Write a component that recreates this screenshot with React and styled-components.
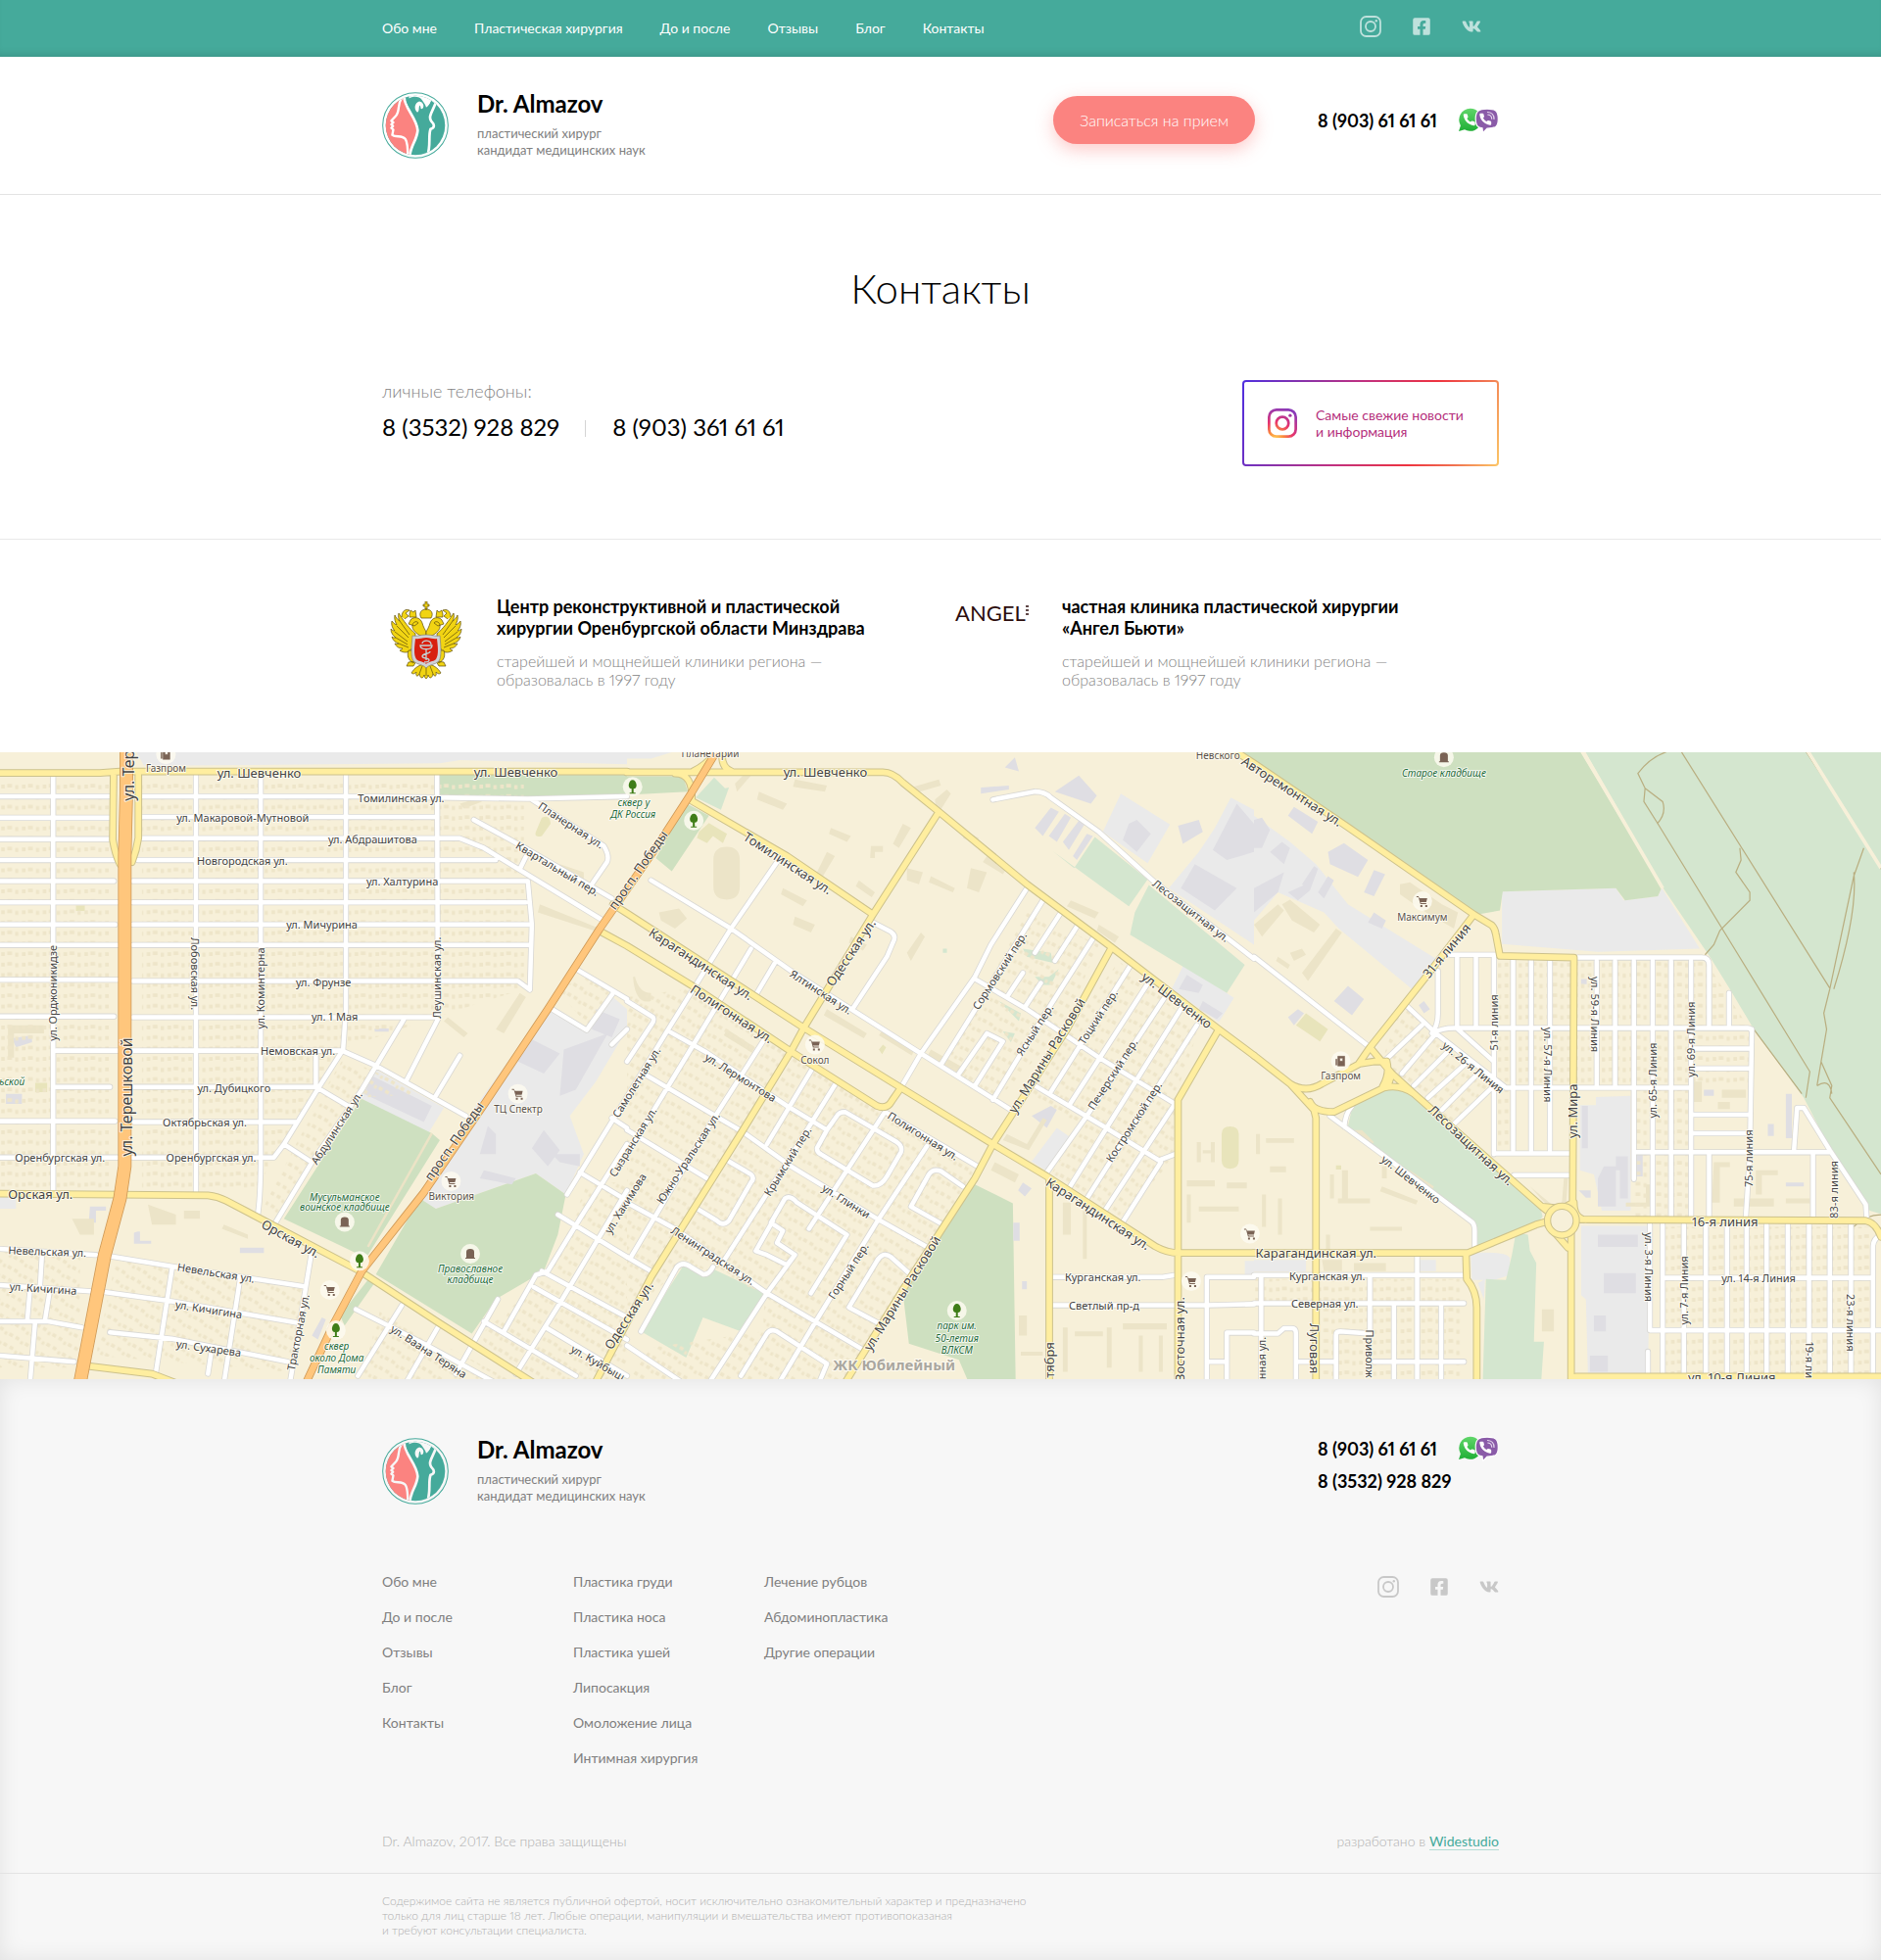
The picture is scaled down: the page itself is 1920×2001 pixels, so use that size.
import React from "react";
import styled, { createGlobalStyle, css } from "styled-components";
import { FaFacebookSquare, FaVk } from "react-icons/fa";

const GlobalStyle = createGlobalStyle`
  *, *::before, *::after { box-sizing: border-box; }
  body { margin: 0; background: #fff; color: #000; font-family: Lato, "Open Sans", sans-serif; font-size: 14px; line-height: 20px; font-variant-numeric: proportional-nums; }
  h1, h2, p, ul { margin: 0; padding: 0; }
  ul { list-style: none; }
  a { color: inherit; text-decoration: none; }
  svg { display: block; }
`;

/* ---------- layout ---------- */

const Container = styled.div`
  width: 100%;
  max-width: 1180px;
  margin: 0 auto;
  padding: 0 20px;
`;

const TopBar = styled.div`
  background: #45aa9b;
  box-shadow: inset 0 -8px 8px -6px rgba(0, 0, 0, 0.14);
`;

const TopBarRow = styled(Container)`
  display: flex;
  align-items: center;
  justify-content: space-between;
  min-height: 58px;
  padding-right: 38px;
`;

const MainNav = styled.nav`
  display: flex;
  flex-wrap: wrap;
  gap: 0 38px;
  padding-bottom: 1px;
  color: #fff;
`;

const Socials = styled.div`
  display: flex;
  align-items: center;
  gap: 31px;
  color: ${(p) => (p.$light ? "rgba(255,255,255,.65)" : "#c8c8c8")};
  ${(p) => p.$light && css`padding-bottom: 4px;`}
`;

const Header = styled.header`
  border-bottom: 1px solid #e3e3e3;
`;

const HeaderRow = styled(Container)`
  display: flex;
  flex-wrap: wrap;
  justify-content: space-between;
  gap: 20px;
  padding-top: 34px;
  padding-bottom: 36px;
`;

const Brand = styled.a`
  display: flex;
  align-items: flex-end;
  gap: 29px;
`;

const BrandName = styled.strong`
  display: block;
  margin-bottom: 8px;
  font-size: 24px;
  line-height: 28px;
`;

const BrandNote = styled.span`
  display: block;
  color: #808080;
  font-size: 13px;
  line-height: 17px;
`;

const HeaderActions = styled.div`
  display: flex;
  align-items: center;
  align-self: flex-start;
  gap: 64px;
  margin-top: 6px;
`;

const BookButton = styled.button`
  height: 49px;
  padding: 0 27px;
  border: 0;
  border-radius: 25px;
  background: #fb8380;
  box-shadow: 0 6px 18px rgba(251, 131, 128, 0.42);
  color: #fff;
  font: 300 16px/20px Lato, sans-serif;
  cursor: pointer;
`;

const Phones = styled.div`
  display: flex;
  flex-direction: column;
  gap: 7px;
`;

const PhoneLine = styled.div`
  display: flex;
  align-items: center;
  gap: 15px;
  font-size: 18px;
  font-weight: 700;
  line-height: 26px;

  a { min-width: 128px; }
`;

const ContactSection = styled.section`
  padding: 70px 0 74px;
  border-bottom: 1px solid #e9e9e9;
`;

const PageTitle = styled.h1`
  font-size: 42px;
  font-weight: 300;
  line-height: 50px;
  text-align: center;
`;

const ContactRow = styled.div`
  display: flex;
  flex-wrap: wrap;
  justify-content: space-between;
  gap: 20px;
  margin-top: 69px;
`;

const PhonesLabel = styled.p`
  margin-bottom: 12px;
  color: #848484;
  font-size: 18px;
  font-weight: 300;
  line-height: 22px;
`;

const PersonalPhones = styled.div`
  display: flex;
  align-items: center;
  font-size: 24px;
  line-height: 28px;

  a + a {
    margin-left: 26px;
    padding-left: 28px;
    background: linear-gradient(#d4d4d4, #d4d4d4) 0 60% / 1px 17px no-repeat;
  }
`;

const InstaCard = styled.a`
  display: flex;
  align-items: center;
  gap: 19px;
  min-width: 262px;
  height: 88px;
  padding: 0 24px;
  border: 2px solid transparent;
  border-radius: 4px;
  background:
    linear-gradient(#fff, #fff) padding-box,
    linear-gradient(110deg, #4f2fe0 0%, #8a32a8 22%, #c03080 42%, #ee3340 68%, #f07050 84%, #fcc766 100%) border-box;
  color: #b52f7c;
  line-height: 17px;
`;

const Clinics = styled.section`
  padding: 57px 0 65px;
`;

const ClinicGrid = styled(Container)`
  display: grid;
  grid-template-columns: 1fr 1fr;
  gap: 14px;
`;

const Clinic = styled.article`
  display: grid;
  grid-template-columns: 117px 1fr;
`;

const ClinicMark = styled.div`
  padding: 6px 0 0 8px;
`;

const ClinicTitle = styled.h2`
  margin-bottom: 13px;
  font-size: 18px;
  font-weight: 700;
  line-height: 22px;
`;

const ClinicText = styled.p`
  color: #848484;
  font-size: 16px;
  font-weight: 300;
  line-height: 19px;
`;

const AngelMark = styled.span`
  display: flex;
  align-items: flex-start;
  color: #2c0d0d;
  font: 400 22px/24px Lato, sans-serif;
`;

const MapFrame = styled.div`
  overflow: hidden;

  svg { width: 100%; height: 640px; }
`;

const Footer = styled.footer`
  background: #f7f7f7;
  box-shadow: inset 0 0 22px rgba(0, 0, 0, 0.09);
`;

const FooterHead = styled(Container)`
  display: flex;
  flex-wrap: wrap;
  justify-content: space-between;
  gap: 20px;
  padding-top: 58px;
`;

const FooterLinks = styled(Container)`
  display: flex;
  flex-wrap: wrap;
  justify-content: space-between;
  align-items: flex-start;
  gap: 20px;
  margin-top: 69px;
  color: #7f7f7f;
`;

const FooterNav = styled.nav`
  display: grid;
  grid-template-columns: repeat(3, 195px);
`;

const LinkColumn = styled.ul`
  display: flex;
  flex-direction: column;
  gap: 16px;
`;

const SocialSlot = styled.div`
  padding-top: 4px;
`;

const Legal = styled(Container)`
  display: flex;
  flex-wrap: wrap;
  justify-content: space-between;
  margin-top: 65px;
  padding-bottom: 22px;
  color: #b0b0b0;
  font-weight: 300;
`;

const StudioLink = styled.a`
  border-bottom: 1px solid #b5dcd5;
  color: #45aa9b;
  font-weight: 400;
`;

const Disclaimer = styled.div`
  border-top: 1px solid #e3e3e3;
  padding: 20px 0 23px;
  color: #b0b0b0;
  font-size: 12px;
  font-weight: 300;
  line-height: 15px;
`;

/* ---------- icons ---------- */

const Logo = ({ ground = "#fff" }) => (
  <svg width="68" height="68" viewBox="19 18 202 202" aria-hidden="true">
    <defs>
      <clipPath id="disc"><circle cx="120" cy="119" r="90" /></clipPath>
    </defs>
    <circle cx="120" cy="119" r="99" fill="none" stroke="#45aa9b" strokeWidth="3" />
    <g clipPath="url(#disc)">
      <rect x="20" y="20" width="200" height="200" fill="#45aa9b" />
      <path d="M92 20C84 62 124 95 127 135C125 165 105 182 103 220H10V20Z" fill="#fb8380" />
      <g fill="none" stroke={ground} strokeLinecap="round" strokeLinejoin="round">
        <path d="M85 26C84 66 124 94 127 134C125 164 104 182 103 214" strokeWidth="8" />
        <path d="M78 36C64 58 74 76 61 90L47 105L53 110L47 116L52 121L47 127L53 132L50 148C60 157 80 147 90 161C96 171 97 190 97 212" strokeWidth="7" />
        <path d="M182 50C172 76 158 92 168 106C178 116 180 126 166 130C158 152 168 178 156 212" strokeWidth="8" />
      </g>
      <path d="M72 20L80 40L88 34C90 46 96 46 100 38C112 30 132 30 140 42L148 54C154 62 150 70 158 62C166 52 166 48 168 44L176 50L190 40L180 20Z" fill={ground} />
      <path d="M90 32C92 56 104 70 118 82C112 66 116 48 130 42C124 36 108 38 104 48C100 44 104 36 98 30Z" fill="#45aa9b" />
      <path d="M132 46C118 50 114 68 126 80C134 74 128 64 134 58C138 66 134 72 142 68C148 60 144 48 132 46Z" fill={ground} />
      <path d="M168 46C170 62 160 78 148 84L144 70C154 66 162 58 168 46Z" fill="#45aa9b" />
    </g>
  </svg>
);

const InstagramIcon = ({ size = 22, stroke = "currentColor", heavy }) => (
  <svg width={size} height={size} viewBox="0 0 22 22" fill="none" stroke={stroke} strokeWidth={heavy ? 2 : 1.8} aria-hidden="true">
    <rect x="1" y="1" width="20" height="20" rx="5.5" />
    <circle cx="11" cy="11" r={heavy ? 4.6 : 5} />
    <circle cx="16.8" cy="5.3" r="1.2" fill={stroke} stroke="none" />
  </svg>
);

const InstagramColor = () => (
  <svg width="30" height="30" viewBox="0 0 22 22" aria-hidden="true">
    <defs>
      <radialGradient id="insta" gradientUnits="userSpaceOnUse" cx="6" cy="23" r="24">
        <stop offset="0" stopColor="#ffd258" />
        <stop offset=".25" stopColor="#fb8a3c" />
        <stop offset=".55" stopColor="#e7336e" />
        <stop offset="1" stopColor="#8a3ab9" />
      </radialGradient>
    </defs>
    <InstagramIcon stroke="url(#insta)" heavy />
  </svg>
);

const HANDSET =
  "M22 16.92v3a2 2 0 0 1-2.18 2 19.79 19.79 0 0 1-8.63-3.07 19.5 19.5 0 0 1-6-6 19.79 19.79 0 0 1-3.07-8.67A2 2 0 0 1 4.11 2h3a2 2 0 0 1 2 1.72c.127.96.361 1.903.7 2.81a2 2 0 0 1-.45 2.11L8.09 9.91a16 16 0 0 0 6 6l1.27-1.27a2 2 0 0 1 2.11-.45c.907.339 1.85.573 2.81.7A2 2 0 0 1 22 16.92z";

const Messengers = () => (
  <svg width="42" height="26" viewBox="0 0 42 26" role="img" aria-label="WhatsApp, Viber">
    <defs>
      <linearGradient id="wa" x1="0" y1="0" x2="0" y2="1">
        <stop offset="0" stopColor="#60d66a" />
        <stop offset="1" stopColor="#1fae35" />
      </linearGradient>
    </defs>
    <path d="M12.500 .8A11.500 11.500 0 1 1 7 22.200L1 24L2.900 18.200A11.500 11.500 0 0 1 12.500 .8Z" fill="url(#wa)" />
    <path d={HANDSET} transform="translate(4.500 5) scale(.6)" fill="#fff" />
    <path d="M30 1.200C39 1.200 41.300 3.500 41.300 11.500C41.300 19 39 21 30 21.200L25.500 25.600L25 20.800C20 20 18.200 18 18.200 11.500C18.200 3.500 21 1.200 30 1.200Z" fill="#8a5ba8" stroke="#fff" strokeWidth="1.200" />
    <path d={HANDSET} transform="translate(21 4.500) scale(.6)" fill="#fff" />
    <path d="M30.500 4.500C34.500 4.800 37 7.500 37 11.500M30.800 7C33.200 7.300 34.600 9 34.700 11.200" fill="none" stroke="#e5d8ee" strokeWidth="1.200" strokeLinecap="round" />
  </svg>
);

const Wing = () => (
  <g stroke="#5c4a08" strokeWidth=".7" strokeLinejoin="round" fill="#f1d413">
    <path d="M26 33C20 28 14 20 9 12C8 16 9 18 10 20C7 18 6 16 5 14C4 18 6 22 7 24C4 23 3 21 2 20C1 24 3 28 5 30C3 30 2 29 1 28C1 32 3 35 6 37C4 37 3 37 2 36C3 40 6 42 9 43C7 44 6 43 5 43C7 47 10 48 13 48C12 49 11 50 10 50C14 53 18 52 20 51C24 47 26 40 26 33Z" />
    <path d="M10 20L20 34M7 25L19 37M5 31L18 41M6 37L18 44M9 43L19 47" fill="none" />
    <path d="M33 36C27 33 22 29 23 24C24 20 28 20 29 22L25 25L19 23L21 19C24 15 31 16 33 22C34 26 36 29 37 31V36Z" />
    <path d="M12 16C12 10 16 7 20 9L16 12L19 15L15 18M20 13L21 9L24 11L26 9L27 16H20Z" />
    <path d="M19 50C17 56 19 60 24 63L28 58L24 50ZM19 62L17 66L24 66L27 61Z" />
  </g>
);

const Emblem = () => (
  <svg width="74" height="80" viewBox="0 0 74 80" aria-hidden="true">
    <Wing />
    <g transform="translate(74 0) scale(-1 1)"><Wing /></g>
    <g stroke="#5c4a08" strokeWidth=".7" fill="#f1d413">
      <path d="M32 17C29 12 32 8 37 8C42 8 45 12 42 17ZM36 8V5H34V3H36V0H38V3H40V5H38V8Z" />
      <path d="M37 64C30 64 25 68 22 73C24 75 26 73 27 72C26 76 28 78 30 74C31 79 34 79 35 75C36 80 38 80 39 75C40 79 43 79 44 74C46 78 48 76 47 72C48 73 50 75 52 73C49 68 44 64 37 64Z" />
      <path d="M37 66V76M33 66L30 74M41 66L44 74" />
    </g>
    <path d="M37 34C31 34 27 36 23 35C22 46 21 56 24 61C28 65 34 64 37 68C40 64 46 65 50 61C53 56 52 46 51 35C47 36 43 34 37 34Z" fill="#cfd2d6" stroke="#777" strokeWidth=".6" />
    <path d="M37 37C32 37 29 39 26 38C25 47 24 54 27 59C30 62 35 61 37 64C39 61 44 62 47 59C50 54 49 47 48 38C45 39 42 37 37 37Z" fill="#d8200f" />
    <path d="M31 45H43C43 50 31 50 31 45ZM37 49V60M42 44C42 39 33 39 33 43M41 51C41 54 33 53 33 56C33 59 40 57 40 60C40 62 36 62 35 62" fill="none" stroke="#c3d3d6" strokeWidth="1.300" />
  </svg>
);

const AngelDots = () => (
  <svg width="3" height="16" viewBox="0 0 3 16" aria-hidden="true">
    <path d="M0 5H3M0 9H3M0 13H3" stroke="#2c0d0d" strokeWidth="1.500" />
  </svg>
);

/* ---------- map ---------- */

/* The city is stored as three square tiles, 1568 units a side. */
const UNIT_X = 640 / 1568;
const UNIT_Y = 645 / 1568;
const tileTransform = (i) => `translate(${i * 640} -1) scale(${UNIT_X} ${UNIT_Y})`;

const AREAS = [
  {
    industry: "M340 0H1568V32L1150 22L1100 30L360 36ZM1370 635L1465 692L1530 608L1568 640V690L1490 820L1425 905L1460 1000L1415 1100L1340 1048L1090 1135L1050 1112L1190 880ZM940 790L1110 885L1070 950L903 862ZM0 1100H40V1135H0Z",
    dark: "M1100 57H1568V108L1320 116L1100 108ZM903 862L1080 948L1100 965L920 1250L890 1245L710 1160ZM1050 1110L1090 1135L1340 1048L1415 1100L1395 1200L1360 1290L1240 1360L1180 1445L940 1298ZM920 1312L935 1322L862 1425L850 1400Z",
    light: "",
    works: "M1320 710L1400 750L1360 800L1285 765ZM1410 740L1520 700L1440 840L1400 855ZM1490 640L1550 665L1530 710L1480 690ZM1200 1000H1240V950L1220 930ZM1330 985L1360 940L1400 990L1370 1030ZM1380 1000H1450V1030L1400 1020ZM930 805L1080 880L1060 920L910 850ZM1210 1040L1290 1060L1280 1075L1200 1060ZM937 688H972V696H937ZM30 712L80 705V722L40 735ZM345 1192H350V1215H378V1222H335V1195ZM225 1130H265V1140H240V1170H222ZM600 1232H660V1245H600ZM780 1450L805 1405L815 1410L795 1460ZM15 850H55V875H15Z",
    blocks: "M370 1125L440 1150V1175H380ZM460 1140H500V1160H460ZM560 1175L620 1200V1210L555 1185ZM180 1160H235V1200H200ZM1120 660L1170 700L1160 710L1110 670ZM1240 690L1300 600L1315 610L1260 700ZM1350 380L1500 440V450L1345 400ZM1400 280L1460 300V320L1395 295ZM20 680H110V700H35V760H20ZM1150 130L1200 115L1205 125L1160 142Z",
    sport: "M1355 165Q1375 155 1377 180L1355 210Q1335 215 1340 200ZM88 823H118V846H88ZM190 383H212V396H190Z",
  },
  {
    industry: "M0 0H120L60 18H0ZM1235 105L1358 182L1302 278L1190 200ZM1510 115L1568 145V480L1355 340L1430 250L1470 190ZM1392 530L1518 612L1480 672L1362 590ZM1075 935L1112 960L1050 1042L1012 1018ZM1545 1265H1568V1300H1545Z",
    dark: "M0 62H140L152 100L0 108ZM150 130L205 160L112 298L72 265ZM870 1075L965 1122L972 1568H855L830 1510L705 1470L690 1345L785 1190ZM1530 0H1568V22Z",
    light: "M218 65L245 92L255 90L235 145L172 115ZM1065 248L1118 290L1170 213L1302 318L1255 385L1185 335ZM1305 332L1545 530L1500 600L1258 455L1270 400ZM145 1270L185 1300L215 1285L345 1345L285 1440L190 1405L148 1505L35 1440ZM990 490L1060 500L1065 525L1000 510ZM1020 560H1055L1080 540L1060 580L1040 580ZM930 620L985 650L980 670L950 640ZM790 490H800V500H790ZM940 695L970 700L960 722Z",
    works: "M1525 130L1568 180V250L1500 270L1465 245ZM1420 280L1525 340L1470 395L1385 340ZM1255 180L1275 170L1310 205L1275 250L1240 220ZM1060 880L1075 890L1050 935L1012 905ZM990 1070L1012 1085L995 1105L978 1090ZM966 1170H982V1215H966ZM988 1315H1000V1335H988ZM1400 555L1440 580L1430 600L1380 590ZM1440 620L1490 650L1475 665L1430 640ZM1378 185L1430 170L1440 200L1390 230ZM1070 100L1130 60L1175 110L1160 130ZM1020 190L1060 140L1080 150L1040 210ZM1055 210L1095 155L1110 165L1075 225ZM1090 225L1130 172L1145 180L1105 245ZM1115 260L1150 205L1165 210L1125 270ZM945 40L970 15L980 50ZM885 90L955 85V95L885 105Z",
    blocks: "M216 270Q216 237 249 237Q282 237 282 270V335Q282 368 249 368Q216 368 216 335ZM420 70L500 85L495 100L415 88ZM330 100L400 130L390 145L325 120ZM270 80L300 50L310 60L275 100ZM610 235H640V250H620V265H608ZM690 180L710 190L680 240L665 230ZM510 190L560 210L550 225L505 205ZM770 120L800 95L810 105L775 160ZM850 200L880 215L870 230L840 215ZM860 290L900 300L880 350L850 340ZM900 260L950 290L940 305L890 275ZM760 310L820 340L815 350L755 325ZM700 290L740 300L730 330L700 320ZM580 320L620 350L612 362L572 335ZM500 250L520 260L490 310L475 300ZM390 340L450 370L440 385L385 355ZM420 410L470 430L460 450L415 430ZM700 500L735 450L745 460L710 520ZM560 460L600 480L590 495L555 475ZM640 690L720 740L712 755L630 705ZM760 740L850 790L840 805L752 755ZM80 400L130 390L150 415L120 440L85 420ZM20 560Q30 600 60 600V620Q20 630 15 560ZM920 1020L980 1050L970 1070L910 1040ZM950 950L1000 975L1040 910L1050 915L1005 990L940 965ZM1110 370L1180 400L1170 415L1100 385ZM1180 430L1230 460L1220 475L1175 445ZM1090 1120H1110V1200H1090ZM1140 1140H1150V1260H1140ZM1400 1065H1470V1080H1400ZM1500 1070H1550V1085H1500ZM1425 970H1435V1020H1425ZM1440 990H1460V998H1440ZM1460 970H1470V1020H1460ZM1400 1100H1410V1170H1400ZM1430 1130H1530V1142H1430ZM1090 1430H1102V1540H1090ZM1120 1440H1190V1452H1120ZM1200 1430H1212V1530H1200ZM980 1400H1000V1450H980ZM985 1490H1040V1500H985ZM1240 1420H1350V1435H1240ZM1280 1450H1290V1540H1280ZM1330 1450H1340V1540H1330ZM710 90L780 70L785 85L715 105ZM500 640L600 700L592 712L492 655ZM250 690L320 735L312 748L242 705Z",
    sport: "M1487 950Q1487 931 1508 931Q1530 931 1530 950V1015Q1530 1036 1508 1036Q1487 1036 1487 1015ZM180 200L205 178L250 205L240 228L215 210L200 228L175 215ZM630 740L640 728L648 735L638 752Z",
  },
  {
    industry: "M620 348L905 340L925 370L1010 360L1020 340L1115 490L860 498L620 478ZM0 160L90 225L155 280L235 380L455 515L395 590L212 440L175 400L60 350L0 420ZM855 858L942 855V1140H870L850 1050L815 1040V878H855ZM818 1178H992L985 1545H835L830 1360L818 1350ZM542 1245Q640 1240 640 1260V1300L600 1312H545ZM0 1262H130V1292H0ZM412 1262H455V1290H412ZM560 1320L578 1310L575 1360Z",
    dark: "M-40 0H815L1020 338L1010 360L928 370L905 340L622 348L615 395L560 405L230 182L-10 25Z",
    light: "M828 0H1568V1148L1540 1140L1440 985L1375 860L1250 690L1190 590L1140 510L1025 342ZM250 865L320 838Q380 835 405 852L715 1130L722 1155L700 1180L558 1230L548 1170L235 930ZM580 1310L630 1312L645 1250L655 1195L685 1200L690 1240L706 1270L700 1465H725L718 1568H572Z",
    works: "M85 160L100 138L160 175L145 205ZM185 250L225 228L285 270L260 312L190 280ZM275 350L300 295L328 305L300 360ZM0 170L20 165L40 195L20 240H0ZM40 250L70 225L90 240L75 280ZM0 340L75 300L60 350L0 400ZM85 350L130 330L140 345L110 370ZM200 620L235 582L275 615L245 655ZM412 630L425 620L440 640L425 650ZM120 330L150 285L160 292L140 345ZM160 350L185 310L200 320L175 365ZM300 400L330 420L320 440L285 425ZM875 1030H905V1130H860V1060ZM860 1200H960V1230H860ZM875 1295H955V1345H875ZM860 1100H900V1120H860ZM905 1005H935V1110H915V1040H905ZM812 1090H842V1108H830ZM1125 840H1150V855H1125ZM1330 1070H1375V1080H1330ZM1285 925H1300V955H1285ZM1330 850H1345V960H1330ZM850 1400H880V1440H850ZM840 1500H885V1540H840ZM955 1000H972V1055H950ZM85 660L110 640L125 650L100 680ZM818 565H832V578H818ZM820 880H835V985H820Z",
    blocks: "M365 330L390 325L470 380L510 400L500 440L430 400L365 355ZM0 430L60 380L75 395L20 460ZM70 380L90 368L165 430L150 450L95 420ZM60 510L90 530L85 540L55 520ZM120 550L205 440L220 450L135 570ZM90 500L120 490L130 505L100 520ZM30 960H100V972H30ZM5 950H15V1000H5ZM40 1030H80V1045H40ZM20 1100H30V1180H20ZM60 1110H70V1200H60ZM190 1050H200V1110H190ZM220 1040H235V1110H220ZM210 1110H290V1122H210ZM240 940H270L300 970L290 980ZM320 1080L410 1115L405 1125L315 1092ZM390 1040L450 1080L445 1090L385 1052ZM320 1030H332V1060H320ZM290 1180H370V1190H290ZM180 1200H190V1240H180ZM1150 1020H1190V1032H1165V1120H1145ZM1200 1110H1300V1130H1200ZM1255 1040H1310V1052H1270V1100H1255ZM1330 1110H1390V1122H1330ZM1100 820H1120V870H1100ZM1170 840H1230V860H1170ZM170 1262H220V1290H175ZM250 1270H330V1290H250ZM930 1120H980V1075H990V1130H930ZM690 1080L745 1125L770 1120L775 1060H785L780 1130L745 1140ZM720 1385H750V1440H720ZM1160 870H1190V888H1160Z",
    sport: "M105 680L130 650L185 690L165 720ZM205 1028H218V1038H205Z",
  },
];

const ROADS = [
  {
    orange: "M1798 -10L1728 105L1640 240L1500 440L1370 640L1215 870L1060 1095L905 1290L835 1420L765 1568",
    avenue: "M316 -5V100L312 260V1030L300 1110L262 1250L200 1568",
    yellow: "M0 54H250L300 50H1568M284 60L282 220Q288 255 300 280M346 60V215Q342 245 330 275M0 1098L520 1102Q545 1105 565 1115L900 1290L1100 1420L1335 1568M215 1525L380 1545L440 1568",
    white:
      "M133 60V1095M490 60V1098M652 60V1000Q652 1100 645 1148M865 58V640L858 740M1093 58L1095 665L1015 820M0 112H275M355 112H890L1320 118L1568 112M0 165H275M355 163H1090M0 218H275M352 216H1150L1210 240L1505 418M0 270H290M345 270H1240M0 322H285M332 322H1320M0 375H295M332 375H1315M0 430H288M332 430H1322M0 481H295M332 481H1325M0 567H295M332 570H1295L1325 592L1330 430L1320 322M0 658H285M332 660H1095M140 743H295M332 743H855L940 780L1165 905M140 833H275M335 833H790L870 880M0 918H288M335 920H740M0 1008H295M332 1008H685L710 975L800 830L858 740M790 755V830M710 975L780 1020M690 1168L780 1020L905 840L1010 665M1150 755L1090 855M1185 170L1310 238L1530 365M1330 120L1510 235Q1525 260 1518 275L1480 330M1315 262L1300 292M0 1235L240 1250M275 1253L440 1280L760 1328M0 1325L225 1340M260 1342L430 1365L740 1418M275 1442L430 1458L720 1515M0 1415H120L205 1430M0 1500L185 1515M105 1250L100 1330M75 1335L68 1415M125 1335L112 1415M88 1415L75 1568M430 1285L390 1540M600 1312L560 1568M530 1480L520 1545M778 1250L725 1568M890 1385L1060 1470L1240 1568M1005 1375L895 1550M1095 1430L1015 1568M1245 1360L1140 1545M1210 1415L1440 1550M1395 1150L1568 1255M1450 1045L1568 1115M1355 1290L1568 1405M1335 1330L1568 1460M1365 1430L1568 1550M1568 1090L1400 1370L1290 1545M1440 540L1568 615M1372 635L1467 692L1532 602M1568 690L1530 728M1530 910L1568 935M1568 975L1450 1160L1370 1290L1340 1300L1260 1440",
  },
  {
    orange: "",
    avenue: "",
    yellow: "M0 52H640Q665 52 690 78L780 150L1000 330L1210 485L1480 690L1568 755M120 55Q165 55 162 120M165 50Q205 30 222 0M238 5Q235 40 262 50M160 122L400 260L615 405M780 150L615 405L440 690L410 745L290 940L60 1305L-80 1568M-35 380L0 402L440 685L685 835L915 975L1050 1055L1320 1228Q1350 1245 1380 1245H1568M-65 448L0 483L160 580L410 745L625 880Q650 890 662 868L685 835M1210 490L1100 690L915 975L870 1060L785 1190L700 1320L545 1568M1480 690L1378 865V1568M1056 1060V1568",
    white:
      "M60 320L260 440L410 545L735 750L960 890M375 275L260 440L100 695L-20 890L-150 1100M615 425L660 448Q675 458 665 475L650 510L565 638M310 490L165 730L0 1000M370 525L325 600M340 720L205 930L10 1255M465 785L350 975M525 820L400 1020L240 1268M35 1440L125 1280Q140 1265 160 1280L190 1298Q205 1300 215 1280M645 895L550 1040L455 1185M750 980L630 1160L475 1410L380 1568M105 695L195 745L400 880L500 940M50 805L290 945L410 1030L625 1160L750 1230M0 940L200 1060M0 1120L120 1185L350 1345L590 1485M0 1255L60 1290M885 1035L645 895M500 940L475 985Q475 995 485 1000L615 1078Q635 1080 650 1055L685 995Q690 980 675 970L545 895Q530 895 525 905ZM840 1080L785 1042Q765 1035 755 1050L710 1130L785 1172M250 1015L310 1050Q320 1060 310 1070L255 1165Q240 1180 225 1165L175 1135M0 620L65 660Q70 668 60 680L0 770M705 1295L660 1255Q640 1240 625 1265L555 1380L640 1425M360 1170L395 1110Q408 1100 425 1120L550 1200L460 1345M360 1170L390 1190L375 1220L420 1250L400 1275L350 1250L322 1240L365 1165M285 1550L350 1445Q360 1432 375 1440L500 1520L480 1568M420 1250L350 1345L205 1568M0 1475L140 1568M1000 340L910 480L870 560L735 750L685 835M1040 370L785 778M1082 405L1020 500M1125 435L1070 520M990 550L950 610M1035 575L995 635M1165 465L1040 660L915 865M870 565L1000 640L1180 760L1370 875M830 800L900 700L940 720L870 830M1260 530L1060 845M1300 580L1105 880M1345 610L1150 905L1050 1045M1385 640L1105 1085M1425 680L1150 1110M1370 875L1195 1140M1335 1020L1240 1168M1020 830L1190 930L1330 1015L1370 1000M915 120L1020 100Q1045 100 1060 115L1180 200L1320 325L1568 515M1065 1305H1340L1370 1300M1065 1375H1450L1568 1372M1568 1305H1450V1568M1568 1443H1500V1568M1450 1515H1500",
  },
  {
    orange: "",
    avenue: "",
    yellow: "M-70 -15L0 30L230 185L550 405L595 432Q603 440 605 455L615 508L800 512L797 1135M550 405L430 560L290 735L262 775M0 755L90 825L150 890L155 910V1568M90 825Q130 850 170 825L265 775L300 770H332M290 735L345 800L400 850L720 1130L745 1150M140 870Q150 895 200 895L325 835Q365 825 400 850M332 770Q340 800 322 832M345 800L335 830M800 1162L1530 1165Q1555 1170 1568 1205M740 1165L705 1175L535 1245H0M530 1245L532 1310Q557 1340 557 1380V1568M793 1190V1568M805 1552H1568M735 1175L785 1232M798 1120L770 1135L722 1130M800 1120Q800 1160 830 1163",
    white:
      "M0 510L290 735M490 505H605M810 512H1120Q1138 512 1138 530V680M460 545V650Q460 680 445 700M508 512V685M555 512V685M600 512V1000M648 515V990M693 515V990M740 515V990M857 520V835M903 520V830M950 520V1062M997 520V1155M1043 520V1155M1093 520V1155M1138 1000V1155M1188 600V680M1245 690L1240 1000L1230 1155M445 700Q470 687 500 687H1235Q1245 687 1245 700M510 690L600 770M630 835H1090M1095 738H1240M1095 787H1240M1095 902H1240M1095 948H1240M600 998H790M650 1052H790M950 995H1440M1398 1000V1160M1350 995L1358 885H1375L1440 990L1530 1125L1532 1155M380 630L455 700L630 835M420 680L330 765M455 700L370 800M495 735L400 830M535 770L435 860M560 800L470 890M595 835L500 925M190 905L320 1000L545 1168Q552 1175 552 1190V1232M245 880Q228 900 226 932M0 1300H525M0 1370H525M18 1300V1568M290 1300V1440M408 1255V1568M350 1370V1568M468 1375V1568M0 1445H60L75 1432H95Q105 1432 105 1445V1568M290 1445L215 1440Q205 1440 205 1450V1568M105 1515H205M300 1515H525M990 1175V1437H1568M1022 1175V1545M1075 1175V1545M1130 1175V1545M1183 1175V1545M1232 1175V1545M1282 1175V1545M1335 1175V1545M1388 1175V1545M1440 1175V1545M1493 1175V1545M1568 1200Q1548 1210 1548 1230V1545M1030 1307H1548M985 1490V1545",
  },
];

const HOUSES = [
  [0, "straight", "M0 70H275V1085H0ZM355 70H1310V590L1090 660L850 740L690 1000L640 1090H355Z"],
  [0, "slanted", "M800 860L860 760L1060 850L900 860L700 1150L660 1130ZM0 1230L200 1250V1530H0ZM290 1260L760 1335L720 1540L240 1500ZM950 1390L1290 1568H900ZM1470 1070H1568V1568H1290L1200 1450L1380 1290ZM1390 590L1470 560L1540 600L1470 680Z"],
  [1, "slanted", "M0 610L150 590L430 750L640 895L880 1035L700 1310L545 1568H0L60 1480L340 1440L345 1345L150 1270L0 1400ZM790 780L1000 400L1180 480L1090 690L930 860ZM1230 520L1430 690L1370 860V1010L1230 1160L1060 1050L1130 940L1000 840Z"],
  [2, "slanted", "M370 620L590 830L500 930L320 770Z"],
  [2, "straight", "M470 520H1130L1180 600L1240 690V830H1095V1155H950V840H640V985H610V520ZM1030 1180H1540V1545H1030ZM0 1310H520V1568H170V1380H0Z"],
];

/* [tile, text, x, y, angle] */
const MAIN_LABELS = [
  [0, "ул. Шевченко", 648, 54, 0], [0, "ул. Шевченко", 1290, 51, 0], [0, "Орская ул.", 101, 1100, 0],
  [0, "Орская ул.", 727, 1210, 29], [0, "просп. Победы", 1136, 968, -55],
  [1, "просп. Победы", 28, 295, -55], [1, "ул. Шевченко", 496, 52, 0], [1, "Томилинская ул.", 402, 278, 33],
  [1, "Карагандинская ул.", 185, 528, 33], [1, "Полигонная ул.", 262, 652, 33], [1, "Одесская ул.", 560, 500, -56],
  [1, "ул. Марины Расковой", 1050, 755, -58], [1, "ул. Марины Расковой", 688, 1345, -58], [1, "ул. Шевченко", 1375, 618, 37],
  [1, "Карагандинская ул.", 1178, 1148, 33], [1, "Одесская ул.", 5, 1400, -57], [1, "Восточная ул.", 1382, 1460, -90],
  [1, "тября", 1056, 1511, -90],
  [2, "Авторемонтная ул.", 95, 100, 33], [2, "31-я линия", 482, 495, -50], [2, "Лесозащитная ул.", 543, 978, 43],
  [2, "ул. Мира", 798, 893, -90], [2, "16-я линия", 1178, 1168, 0], [2, "Карагандинская ул.", 155, 1246, 0],
  [2, "Луговая", 152, 1482, 90], [2, "ул. 10-я Линия", 1195, 1554, 0],
];

const STREET_LABELS = [
  [0, "Томилинская ул.", 1003, 118, 0], [0, "ул. Макаровой-Мутновой", 607, 166, 0], [0, "ул. Абдрашитова", 932, 220, 0],
  [0, "Новгородская ул.", 606, 272, 0], [0, "ул. Халтурина", 1006, 324, 0], [0, "ул. Мичурина", 805, 430, 0],
  [0, "ул. Фрунзе", 809, 573, 0], [0, "ул. 1 Мая", 837, 660, 0], [0, "Немовская ул.", 745, 745, 0],
  [0, "ул. Дубицкого", 585, 836, 0], [0, "Октябрьская ул.", 512, 922, 0], [0, "Оренбургская ул.", 528, 1009, 0],
  [0, "Оренбургская ул.", 150, 1010, 0], [0, "ул. Орджоникидзе", 133, 600, -90], [0, "Лобовская ул.", 487, 552, 90],
  [0, "ул. Коминтерна", 652, 588, -90], [0, "Леушинская ул.", 1094, 562, -90], [0, "Планерная ул.", 1428, 184, 33],
  [0, "Квартальный пер.", 1394, 292, 31], [0, "Абдулинская ул.", 842, 935, -57], [0, "Невельская ул.", 118, 1242, 2],
  [0, "Невельская ул.", 540, 1295, 9], [0, "ул. Кичигина", 108, 1334, 4], [0, "ул. Кичигина", 522, 1386, 9],
  [0, "ул. Сухарева", 522, 1482, 8], [0, "Тракторная ул.", 746, 1442, -79], [0, "ул. Ваана Теряна", 1072, 1490, 33],
  [0, "ул. Куйбыш", 1495, 1518, 30], [0, "Самолетная ул.", 1592, 822, -58],
  [1, "Сызранская ул.", 15, 970, -58], [1, "ул. Хакимова", -4, 1122, -58], [1, "Ялтинская ул.", 485, 598, 33],
  [1, "ул. Лермонтова", 284, 810, 32], [1, "Южно-Уральская ул.", 153, 1010, -57], [1, "Крымский пер.", 402, 1018, -58],
  [1, "ул. Глинки", 548, 1117, 32], [1, "Ленинградская ул.", 215, 1252, 33], [1, "Горный пер.", 554, 1290, -57],
  [1, "Полигонная ул.", 740, 955, 32], [1, "Сормовский пер.", 932, 545, -57], [1, "Ясный пер.", 1020, 692, -57],
  [1, "Тоцкий пер.", 1178, 660, -57], [1, "Печерский пер.", 1215, 802, -57], [1, "Костромской пер.", 1268, 920, -57],
  [1, "Лесозащитная ул.", 1410, 396, 38], [1, "Курганская ул.", 1190, 1306, 0], [1, "Светлый пр-д", 1193, 1377, 0],
  [2, "ул. 26-я Линия", 548, 785, 39], [2, "51-я линия", 600, 673, -90], [2, "ул. 57-я Линия", 735, 778, 90],
  [2, "ул. 59-я Линия", 852, 653, 90], [2, "ул. 65-я Линия", 997, 817, -90], [2, "ул. 69-я Линия", 1093, 715, -90],
  [2, "75-я линия", 1237, 1010, -90], [2, "83-я линия", 1450, 1088, -90], [2, "ул. Шевченко", 392, 1063, 38],
  [2, "Курганская ул.", 183, 1304, 0], [2, "Северная ул.", 177, 1372, 0], [2, "Приволж", 288, 1495, 90],
  [2, "нная ул.", 20, 1506, -90], [2, "ул. 3-я Линия", 987, 1280, 90], [2, "ул. 7-я Линия", 1077, 1338, -90],
  [2, "ул. 14-я Линия", 1262, 1309, 0], [2, "19-я ли", 1390, 1511, 90], [2, "23-я линия", 1491, 1418, 90],
];

const PLACE_LABELS = [
  [0, "Газпром", 415, 42, 0], [0, "ТЦ Спектр", 1296, 888, 0], [0, "Виктория", 1129, 1104, 0], [1, "Сокол", 470, 766, 0],
  [1, "Планетарий", 208, 6, 0], [1, "Невского", 1478, 11, 0], [2, "Максимум", 421, 411, 0], [2, "Газпром", 217, 807, 0],
];

const PARK_LABELS = [
  [0, "ьской", 30, 820, 0], [0, "Мусульманское", 862, 1107, 0], [0, "воинское кладбище", 862, 1132, 0],
  [0, "Православное", 1176, 1286, 0], [0, "кладбище", 1176, 1311, 0], [0, "сквер", 842, 1476, 0],
  [0, "около Дома", 842, 1506, 0], [0, "Памяти", 842, 1535, 0], [0, "сквер у", 1585, 127, 0],
  [0, "ДК Россия", 1583, 156, 0], [1, "парк им.", 825, 1427, 0], [1, "50-летия", 825, 1457, 0],
  [1, "ВЛКСМ", 825, 1487, 0], [2, "Старое кладбище", 475, 54, 0],
];

const AVENUE_LABELS = [[0, "ул. Терешковой", 316, 858, -90], [0, "ул. Тер", 322, 60, -90]];

const PINS = [
  [0, "tomb", 862, 1168], [0, "tomb", 1176, 1247], [2, "tomb", 475, 15],
  [0, "tree", 899, 1265], [0, "tree", 840, 1437], [1, "tree", 14, 88], [1, "tree", 167, 172], [1, "tree", 825, 1388],
  [0, "cart", 1295, 850], [0, "cart", 1128, 1067], [0, "cart", 825, 1337], [1, "cart", 470, 728], [1, "cart", 1411, 1315],
  [1, "cart", 1558, 1197], [2, "cart", 421, 372],
  [0, "fuel", 415, 8], [2, "fuel", 217, 769],
];

const PIN_SHAPES = {
  tomb: <path d="M-5 5V4H-4V-2Q-4 -5 0 -5Q4 -5 4 -2V4H5V5Z" fill="#7a6355" />,
  tree: <path d="M-1 6V2Q-4 2 -4 -2Q-3 -7 0 -7Q3 -7 4 -2Q4 2 1 2V6H3V7H-3V6Z" fill="#3f7d18" />,
  cart: <path d="M-6 -5H-4L-3 -3H5L4 1H-2L-1 2H4V3H-2L-4 -4H-6ZM-2 4H0V6H-2ZM3 4H5V6H3Z" fill="#7a6355" />,
  fuel: <path fillRule="evenodd" d="M-3 -5H4V5H-3ZM-1 -3V0H2V-3ZM-5 -2H-4V4H-5Z" fill="#7a6355" stroke="#7a6355" strokeWidth=".5" />,
};

const LabelGroup = styled.g`
  font-family: "Noto Sans", "Open Sans", sans-serif;
  font-size: ${(p) => p.$size}px;
  font-style: ${(p) => (p.$italic ? "italic" : "normal")};
  font-weight: ${(p) => (p.$bold ? 700 : 400)};
  fill: ${(p) => p.$color};
  stroke: ${(p) => p.$halo};
  stroke-width: 2px;
  stroke-linejoin: round;
  paint-order: stroke;
  text-anchor: middle;
`;

const Labels = ({ items, size, color = "#444", halo = "rgba(255,253,245,.85)", italic, bold }) => (
  <LabelGroup $size={size} $color={color} $halo={halo} $italic={italic} $bold={bold}>
    {items.map(([tile, text, x, y, angle]) => (
      <text
        key={`${tile}-${text}-${x}-${y}`}
        dy=".35em"
        transform={`translate(${tile * 640 + x * UNIT_X} ${y * UNIT_Y - 1}) rotate(${angle})`}
      >
        {text}
      </text>
    ))}
  </LabelGroup>
);

const Layer = ({ source, kind, ...rest }) =>
  source.map((tile, i) => <path key={`${kind}${i}`} d={tile[kind]} transform={tileTransform(i)} {...rest} />);

const CityMap = () => (
  <svg viewBox="0 0 1920 640" preserveAspectRatio="xMidYMid slice" role="img" aria-label="Карта">
    <defs>
      <pattern id="straight" width="52" height="26" patternUnits="userSpaceOnUse">
        <path d="M3 5H12V14H3ZM18 3H30V12H18ZM38 6H46V16H38Z" fill="#eee5c9" />
      </pattern>
      <pattern id="slanted" width="46" height="28" patternUnits="userSpaceOnUse" patternTransform="rotate(32)">
        <path d="M4 5H14V14H4ZM22 4H32V13H22ZM38 8H45V17H38Z" fill="#eee5c9" />
      </pattern>
    </defs>
    <rect width="1920" height="640" fill="#f7f0d9" />
    <Layer source={AREAS} kind="industry" fill="#eaeaea" />
    <Layer source={AREAS} kind="light" fill="#d4e6cf" />
    <Layer source={AREAS} kind="dark" fill="#cee0c0" />
    <Layer source={AREAS} kind="works" fill="#dfdee3" />
    <Layer source={AREAS} kind="blocks" fill="#ece4c8" />
    <Layer source={AREAS} kind="sport" fill="#e8e4bb" />
    {HOUSES.map(([tile, fill, d]) => (
      <path key={d} d={d} transform={tileTransform(tile)} fill={`url(#${fill})`} />
    ))}
    <g transform={tileTransform(2)} fill="none" stroke="#b9ae80" strokeWidth="3">
      <path d="M1035 0Q990 15 960 55L978 92L975 125L1010 180L1390 795L1380 860M978 92L1022 125Q1032 155 1008 180M1068 0L1440 588M1215 240L1218 270L1205 300L1240 350V370L1165 445L1150 480L1128 505M1380 0L1500 180L1568 292M1525 240L1500 310L1440 590L1425 650L1432 690L1408 830M1500 300Q1510 400 1450 590M1418 770L1445 830L1440 860L1568 1050M1408 830Q1440 810 1445 850M1250 690L1370 850M1500 1180Q1530 1150 1568 1150" />
      <path d="M822 0L1022 340M1385 0L1568 290" stroke="#f7f0d9" strokeWidth="9" />
    </g>
    <path d="M1080 948L920 1230" transform={tileTransform(0)} stroke="#ece3c6" strokeWidth="6" />
    <g fill="none" strokeLinecap="round" strokeLinejoin="round">
      <Layer source={ROADS} kind="white" stroke="#d9d8d4" strokeWidth="15" />
      <Layer source={ROADS} kind="white" stroke="#fff" strokeWidth="11" />
      <Layer source={ROADS} kind="yellow" stroke="#cdc28c" strokeWidth="19" />
      <Layer source={ROADS} kind="yellow" stroke="#ffee9f" strokeWidth="14" />
      <Layer source={ROADS} kind="orange" stroke="#cf9a58" strokeWidth="20" />
      <Layer source={ROADS} kind="orange" stroke="#ffc67c" strokeWidth="16" />
      <Layer source={ROADS} kind="avenue" stroke="#cf9a58" strokeWidth="34" />
      <Layer source={ROADS} kind="avenue" stroke="#ffc67c" strokeWidth="30" />
    </g>
    <g transform={tileTransform(2)}>
      <circle cx="770" cy="1165" r="36" fill="#f7f0d9" stroke="#cdc28c" strokeWidth="18" />
      <circle cx="770" cy="1165" r="36" fill="none" stroke="#ffee9f" strokeWidth="13" />
    </g>
    {PINS.map(([tile, kind, x, y]) => (
      <g key={`${tile}-${x}`} transform={`translate(${tile * 640 + x * UNIT_X} ${y * UNIT_Y - 1})`}>
        <circle r="10" fill="#fdfaf0" fillOpacity=".85" />
        {PIN_SHAPES[kind]}
      </g>
    ))}
    <Labels items={[[1, "ЖК Юбилейный", 668, 1524, 0]]} size={15} color="#aaa79f" bold />
    <Labels items={STREET_LABELS} size={11} />
    <Labels items={PLACE_LABELS} size={10} color="#5a524c" />
    <Labels items={PARK_LABELS} size={10} color="#1f6b3a" halo="rgba(255,255,255,.75)" italic />
    <Labels items={MAIN_LABELS} size={13} />
    <Labels items={AVENUE_LABELS} size={16} />
  </svg>
);

/* ---------- page ---------- */

const MENU = ["Обо мне", "Пластическая хирургия", "До и после", "Отзывы", "Блог", "Контакты"];

const FOOTER_MENU = [
  ["Обо мне", "До и после", "Отзывы", "Блог", "Контакты"],
  ["Пластика груди", "Пластика носа", "Пластика ушей", "Липосакция", "Омоложение лица", "Интимная хирургия"],
  ["Лечение рубцов", "Абдоминопластика", "Другие операции"],
];

const SocialLinks = ({ light }) => (
  <Socials $light={light}>
    <a href="#instagram" aria-label="Instagram"><InstagramIcon /></a>
    <a href="#facebook" aria-label="Facebook"><FaFacebookSquare size={20} /></a>
    <a href="#vk" aria-label="ВКонтакте"><FaVk size={20} /></a>
  </Socials>
);

const BrandBlock = ({ ground }) => (
  <Brand href="#home">
    <Logo ground={ground} />
    <span>
      <BrandName>Dr. Almazov</BrandName>
      <BrandNote>пластический хирург</BrandNote>
      <BrandNote>кандидат медицинских наук</BrandNote>
    </span>
  </Brand>
);

const MobilePhone = () => (
  <PhoneLine>
    <a href="tel:8903616161">8 (903) 61 61 61</a>
    <Messengers />
  </PhoneLine>
);

export default function App() {
  return (
    <>
      <GlobalStyle />
      <TopBar>
        <TopBarRow>
          <MainNav>
            {MENU.map((item) => <a key={item} href="#menu">{item}</a>)}
          </MainNav>
          <SocialLinks light />
        </TopBarRow>
      </TopBar>

      <Header>
        <HeaderRow>
          <BrandBlock />
          <HeaderActions>
            <BookButton type="button">Записаться на прием</BookButton>
            <MobilePhone />
          </HeaderActions>
        </HeaderRow>
      </Header>

      <main>
        <ContactSection>
          <Container>
            <PageTitle>Контакты</PageTitle>
            <ContactRow>
              <div>
                <PhonesLabel>личные телефоны:</PhonesLabel>
                <PersonalPhones>
                  <a href="tel:83532928829">8 (3532) 928 829</a>
                  <a href="tel:89033616161">8 (903) 361 61 61</a>
                </PersonalPhones>
              </div>
              <InstaCard href="#instagram">
                <InstagramColor />
                <span>Самые свежие новости<br />и информация</span>
              </InstaCard>
            </ContactRow>
          </Container>
        </ContactSection>

        <Clinics>
          <ClinicGrid>
            <Clinic>
              <ClinicMark><Emblem /></ClinicMark>
              <div>
                <ClinicTitle>Центр реконструктивной и пластической<br />хирургии Оренбургской области Минздрава</ClinicTitle>
                <ClinicText>старейшей и мощнейшей клиники региона —<br />образовалась в 1997 году</ClinicText>
              </div>
            </Clinic>
            <Clinic>
              <ClinicMark><AngelMark>ANGEL<AngelDots /></AngelMark></ClinicMark>
              <div>
                <ClinicTitle>частная клиника пластической хирургии<br />«Ангел Бьюти»</ClinicTitle>
                <ClinicText>старейшей и мощнейшей клиники региона —<br />образовалась в 1997 году</ClinicText>
              </div>
            </Clinic>
          </ClinicGrid>
        </Clinics>

        <MapFrame><CityMap /></MapFrame>
      </main>

      <Footer>
        <FooterHead>
          <BrandBlock ground="#f7f7f7" />
          <Phones>
            <MobilePhone />
            <PhoneLine><a href="tel:83532928829">8 (3532) 928 829</a></PhoneLine>
          </Phones>
        </FooterHead>
        <FooterLinks>
          <FooterNav>
            {FOOTER_MENU.map((column) => (
              <LinkColumn key={column[0]}>
                {column.map((item) => <li key={item}><a href="#menu">{item}</a></li>)}
              </LinkColumn>
            ))}
          </FooterNav>
          <SocialSlot><SocialLinks /></SocialSlot>
        </FooterLinks>
        <Legal>
          <span>Dr. Almazov, 2017. Все права защищены</span>
          <span>разработано в <StudioLink href="#widestudio">Widestudio</StudioLink></span>
        </Legal>
        <Disclaimer>
          <Container>
            Содержимое сайта не является публичной офертой, носит исключительно ознакомительный характер и предназначено<br />
            только для лиц старше 18 лет. Любые операции, манипуляции и вмешательства имеют противопоказаная<br />
            и требуют консультации специалиста.
          </Container>
        </Disclaimer>
      </Footer>
    </>
  );
}
